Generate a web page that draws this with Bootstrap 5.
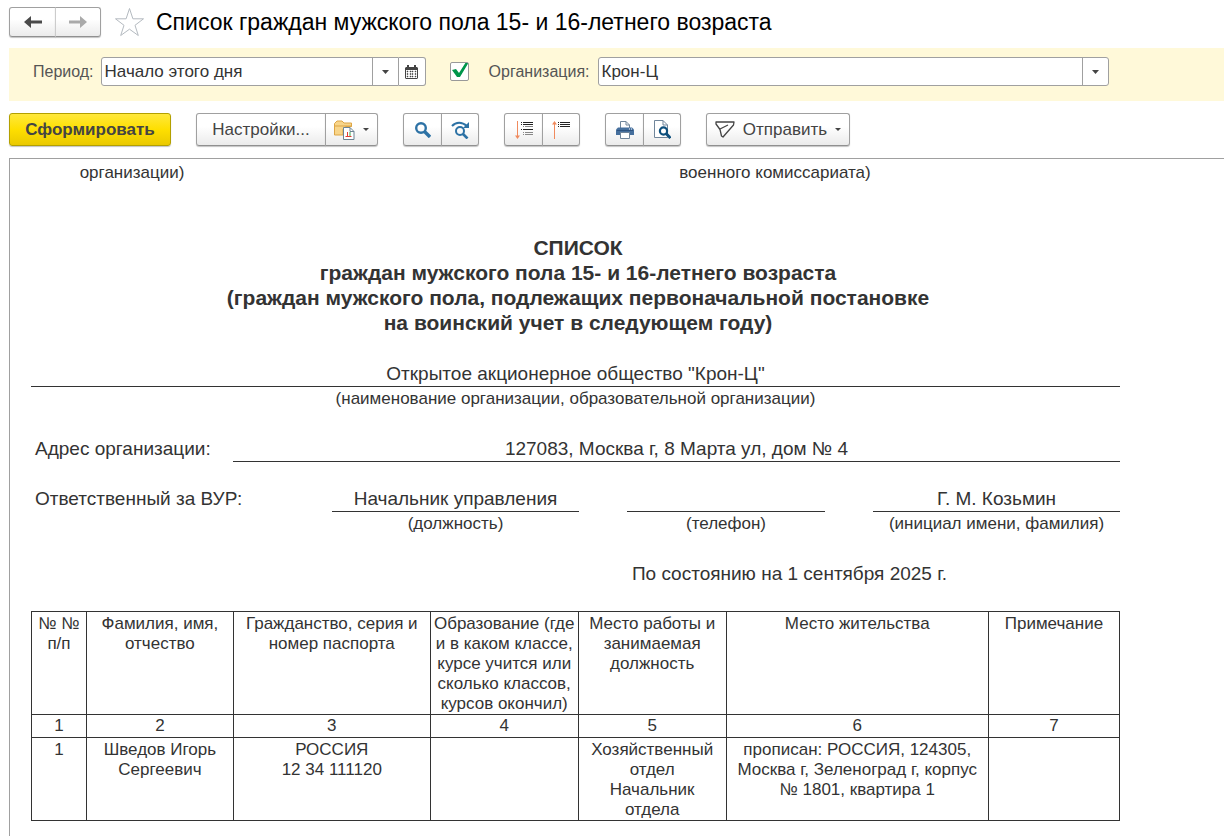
<!DOCTYPE html>
<html lang="ru">
<head>
<meta charset="utf-8">
<meta name="viewport" content="width=device-width, initial-scale=1">
<title>Список граждан мужского пола 15- и 16-летнего возраста</title>
<link rel="stylesheet" href="https://cdn.jsdelivr.net/npm/bootstrap@5.3.0/dist/css/bootstrap.min.css">
<style>
body{font-family:"Liberation Sans",Arial,sans-serif;font-size:16px;line-height:20px;color:#333;background:#fff}
.app{height:100vh;padding-left:9px;overflow:hidden}
.titlebar{height:48px;padding-top:7px}
.titlebar h1{font-size:23px;line-height:30px;color:#000;font-weight:400}
.btn-tool{--bs-btn-color:#444;--bs-btn-border-color:#a0a0a0;--bs-btn-hover-color:#222;--bs-btn-hover-border-color:#888;--bs-btn-active-border-color:#888;--bs-btn-border-radius:3px;--bs-btn-padding-x:0;--bs-btn-padding-y:0;--bs-btn-font-size:17px;--bs-btn-line-height:20px;
 height:33px;display:inline-flex;align-items:center;justify-content:center;background:linear-gradient(#fff 40%,#ebebeb);border-bottom-color:#909090;box-shadow:0 1px 1px #c4c4c4}
.btn-icon{width:39px}
.btn-icon:last-child{width:38px}
.nav-pair .btn-tool{width:47px;height:30px}
.nav-pair .btn-tool + .btn-tool{width:46px;border-left-color:#ccc}
.btn-star{margin-left:14px}
.btn-run{--bs-btn-color:#444;font-weight:700;width:162px;background:linear-gradient(#ffe83c,#fedf00 50%,#eac900);border-color:#b3a000}
.btn-settings{width:130px}
.btn-variants{width:53px}
.btn-send{width:144px}
.caret{width:0;border:3px solid transparent;border-top:3px solid #444;border-bottom:0}
.filters{background:#fff9d9;min-height:53px;padding:9px 115px 15px 24px;color:#555}
.field{height:29px;border:1px solid #a0a0a0;border-radius:3px;padding:0 30px 0 3px;color:#333;font-size:17px;line-height:20px;
 background-color:#fff;background-image:url("data:image/svg+xml,%3Csvg xmlns='http://www.w3.org/2000/svg' width='26' height='27'%3E%3Cpath d='M.5 0v27' stroke='%23a0a0a0'/%3E%3Cpath d='M10 12h7l-3.500 4z' fill='%23444'/%3E%3C/svg%3E");background-size:26px 27px;background-position:right center;background-repeat:no-repeat}
.period{width:325px}
.period .field{border-radius:3px 0 0 3px}
.btn-cal{width:27px;height:29px;background:#fff;box-shadow:none;border-color:#a0a0a0;border-radius:0 3px 3px 0}
.tick{width:19px;height:19px;margin:0;border:1px solid #999!important;border-radius:2px!important;background-color:#fff!important;background-origin:border-box;background-size:19px 19px!important}
.tick:checked{background-image:url("data:image/svg+xml,%3Csvg xmlns='http://www.w3.org/2000/svg' width='19' height='19'%3E%3Cpath d='M2 8l4-1 3 4L16 0l3 0L10 15H7z' fill='%2300964a'/%3E%3C/svg%3E")!important}
.filter-label{margin-right:7px}
.toolbar{gap:25px;padding:12px 0}
.sheet{border:1px solid #a0a0a0;border-width:1px 0 0 1px;padding:0 104px 16px 21px;font-size:17px}
.sheet-top{display:grid;grid-template-columns:202fr 197fr 197fr 296fr 197fr;height:76px}
.doc-title{font-size:21px;line-height:25px;font-weight:700;margin:0 0 27px;padding-left:5px}
.big{font-size:19px;line-height:24px}
.ruled{border-bottom:1px solid #333;height:25px;text-align:center}
.caption-line{text-align:center;padding-top:2px;height:25px}
.address{display:grid;grid-template-columns:202fr 887fr;margin-top:25px}
.officer{display:grid;grid-template-columns:301fr 247fr 48fr 198fr 48fr 247fr;margin-top:25px}
.officer .post{grid-column:2}.officer .phone{grid-column:4}.officer .person{grid-column:6}
.as-of{margin:25px 0;text-align:center;padding-left:428px}
.roster{--bs-table-color:#333;--bs-table-bg:transparent;border-color:#333;table-layout:fixed;margin:0;text-align:center}
.roster>:not(caption)>*>*{padding:2px 1px 0;font-weight:400;border:1px solid #333;vertical-align:top}
.roster .heads th{height:103px}
.roster .nums td{height:23px;padding-top:1px}
.roster .person-row td{height:83px}
</style>
</head>
<body>
<main class="app">
<header class="titlebar d-flex align-items-start">
 <div class="btn-group nav-pair" role="group" aria-label="Навигация">
  <button type="button" class="btn btn-tool" aria-label="Назад"><svg width="18" height="14" viewBox="0 0 18 14"><path d="M0 7l7-6v4.500h11v3H7V13z" fill="#4a4a4a"/></svg></button>
  <button type="button" class="btn btn-tool" aria-label="Вперёд"><svg width="18" height="14" viewBox="0 0 18 14"><path d="M18 7l-7-6v4.500H0v3h11V13z" fill="#aaa"/></svg></button>
 </div>
 <button type="button" class="btn btn-star p-0 border-0 d-flex" aria-label="В избранное"><svg width="29" height="30" viewBox="0 0 29 30"><path d="M14.500 1.500l3.400 10.300H28.500l-8.500 6.500 3.300 10.200-8.800-6.300-8.800 6.300L9 18.300.5 11.800h10.600z" fill="#fff" stroke="#b4bac0"/></svg></button>
 <h1 class="mb-0 ms-2 ps-1">Список граждан мужского пола 15- и 16-летнего возраста</h1>
</header>

<form class="filters d-flex align-items-center">
 <label for="period" class="filter-label">Период:</label>
 <div class="period d-flex flex-shrink-0">
  <select id="period" class="form-select field"><option>Начало этого дня</option></select>
  <button type="button" class="btn btn-tool btn-cal flex-shrink-0 border-start-0" aria-label="Выбрать период"><svg width="13" height="14" viewBox="0 0 13 14"><path d="M1 2h1V0h2v2h5V0h2v2h1l1 1v10l-1 1H1l-1-1V3z" fill="#444"/><path d="M1 5h11v8H1z" fill="#fff"/><path d="M2 6h1v1H2zm3 0h1v1H5zm2 0h1v1H7zm3 0h1v1h-1zM2 8.500h1v1H2zm3 0h1v1H5zm2 0h1v1H7zm3 0h1v1h-1zM2 11h1v1H2zm3 0h1v1H5zm2 0h1v1H7zm3 0h1v1h-1z" fill="#444" stroke="#444" stroke-width=".5"/></svg></button>
 </div>
 <input id="useorg" type="checkbox" class="form-check-input tick flex-shrink-0 ms-4 me-3" checked aria-label="Отбор по организации">
 <label for="org" class="me-2 ps-1">Организация:</label>
 <select id="org" class="form-select field"><option>Крон-Ц</option></select>
</form>

<div class="toolbar d-flex" role="toolbar" aria-label="Команды отчёта">
 <button type="button" class="btn btn-tool btn-run">Сформировать</button>
 <div class="btn-group">
  <button type="button" class="btn btn-tool btn-settings">Настройки...</button>
  <button type="button" class="btn btn-tool btn-variants gap-2" aria-label="Варианты отчёта"><svg width="21" height="20" viewBox="0 0 21 20"><path d="M.5 15V3.500L3 1h5l2 2h7.500v3.500h-6L9 9v6z" fill="#f8d58a" stroke="#dda545"/><path d="M1 6h17" stroke="#dda545"/><path d="M9.500 7.500H16l4 4v8H9.500z" fill="#fff" stroke="#6d8494"/><path d="M16 7.500v4h4" fill="none" stroke="#6d8494"/><path d="M13.500 16v-4" stroke="#e23c32"/><path d="M16 16v-4" stroke="#38a34a"/><path d="M11.500 16.500h6" stroke="#e23c32"/></svg><span class="caret"></span></button>
 </div>
 <div class="btn-group">
  <button type="button" class="btn btn-tool btn-icon" aria-label="Найти"><svg width="16" height="16" viewBox="0 0 16 16" fill="none" stroke="#2d72a5"><circle cx="6" cy="6" r="4.800" stroke-width="2.400"/><path d="M9.500 9.500L15 15" stroke-width="3.400"/></svg></button>
  <button type="button" class="btn btn-tool btn-icon" aria-label="Найти далее"><svg width="19" height="18" viewBox="0 0 19 18" fill="none" stroke="#2d72a5"><path d="M1 5C5 .5 11 .5 16 5" stroke-width="2"/><path d="M18 1v6h-6z" fill="#2d72a5" stroke="none"/><circle cx="9" cy="10" r="4" stroke-width="2"/><path d="M12 13l4.500 4.500" stroke-width="2.600"/></svg></button>
 </div>
 <div class="btn-group">
  <button type="button" class="btn btn-tool btn-icon" aria-label="Развернуть группы"><svg width="18" height="18" viewBox="0 0 18 18"><path d="M2.500 0v15" stroke="#f08a5d"/><path d="M0 14.500h5L2.500 18z" fill="#f08a5d"/><path d="M6 1.500h1m1 0h10M6 3.500h1m1 0h10" stroke="#222"/><path d="M8 5.500h1m1 0h8M8 11.500h1m1 0h8M8 13.500h1m1 0h8" stroke="#888"/><path d="M6 8.500h1m1 0h10" stroke="#222"/></svg></button>
  <button type="button" class="btn btn-tool btn-icon" aria-label="Свернуть группы"><svg width="18" height="18" viewBox="0 0 18 18"><path d="M2.500 3v15" stroke="#f08a5d"/><path d="M0 3.500h5L2.500 0z" fill="#f08a5d"/><path d="M6 1.500h1m1 0h10M6 3.500h1m1 0h10M6 5.500h1m1 0h10" stroke="#222"/></svg></button>
 </div>
 <div class="btn-group">
  <button type="button" class="btn btn-tool btn-icon" aria-label="Печать"><svg width="18" height="18" viewBox="0 0 18 18"><path d="M4.500 8V.5H10L13.500 4v4" fill="#fff" stroke="#70859a"/><path d="M10 .5V4h3.500" fill="none" stroke="#70859a"/><path d="M2 6.500h14l2 2V14H0V8.500z" fill="#456f9d"/><path d="M1 9.500h16" stroke="#2d5380"/><path d="M13 8h1m1 0h1" stroke="#fff"/><path d="M4.500 11.500h9v6h-9z" fill="#fff" stroke="#70859a"/></svg></button>
  <button type="button" class="btn btn-tool btn-icon" aria-label="Предварительный просмотр"><svg width="18" height="19" viewBox="0 0 18 19"><path d="M1.500 17.500V.5H10L14.500 5v12.500z" fill="#fff" stroke="#70859a"/><path d="M10 .5V5h4.500" fill="none" stroke="#70859a"/><circle cx="10.500" cy="11" r="3.600" fill="#fff" stroke="#0d4f7d" stroke-width="2.200"/><path d="M13 13.500l4.500 4.500" stroke="#0d4f7d" stroke-width="3"/></svg></button>
 </div>
 <button type="button" class="btn btn-tool btn-send gap-2"><svg width="20" height="17" viewBox="0 0 20 17" fill="none" stroke="#444" stroke-width="1.300" stroke-linejoin="round"><path d="M1 1h18l-.5 3L8 16 6.500 15 5 8.500 1 3zM5 8l8-4"/></svg><span>Отправить</span><span class="caret"></span></button>
</div>

<section class="sheet" aria-label="Отчёт">
 <div class="sheet-top text-center"><span class="pt-1">организации)</span><span></span><span></span><span class="pt-1">военного комиссариата)</span></div>
 <h2 class="doc-title text-center">СПИСОК<br>граждан мужского пола 15- и 16-летнего возраста<br>(граждан мужского пола, подлежащих первоначальной постановке<br>на воинский учет в следующем году)</h2>
 <div class="ruled big">Открытое акционерное общество "Крон-Ц"</div>
 <div class="caption-line">(наименование организации, образовательной организации)</div>
 <div class="address"><span class="big ps-1">Адрес организации:</span><span class="ruled big">127083, Москва г, 8 Марта ул, дом № 4</span></div>
 <div class="officer">
  <span class="big ps-1">Ответственный за ВУР:</span>
  <div class="post"><div class="ruled big">Начальник управления</div><div class="caption-line">(должность)</div></div>
  <div class="phone"><div class="ruled big"></div><div class="caption-line">(телефон)</div></div>
  <div class="person"><div class="ruled big">Г. М. Козьмин</div><div class="caption-line">(инициал имени, фамилия)</div></div>
 </div>
 <p class="as-of big">По состоянию на 1 сентября 2025 г.</p>
 <table class="table roster">
  <colgroup><col style="width:5.05%"><col style="width:13.5%"><col style="width:18.1%"><col style="width:13.6%"><col style="width:13.6%"><col style="width:24.1%"><col style="width:12.05%"></colgroup>
  <thead>
   <tr class="heads"><th>№ №<br>п/п</th><th>Фамилия, имя,<br>отчество</th><th>Гражданство, серия и<br>номер паспорта</th><th>Образование (где<br>и в каком классе,<br>курсе учится или<br>сколько классов,<br>курсов окончил)</th><th>Место работы и<br>занимаемая<br>должность</th><th>Место жительства</th><th>Примечание</th></tr>
  </thead>
  <tbody>
   <tr class="nums"><td>1</td><td>2</td><td>3</td><td>4</td><td>5</td><td>6</td><td>7</td></tr>
   <tr class="person-row"><td>1</td><td>Шведов Игорь<br>Сергеевич</td><td>РОССИЯ<br>12 34 111120</td><td></td><td>Хозяйственный<br>отдел<br>Начальник<br>отдела</td><td>прописан: РОССИЯ, 124305,<br>Москва г, Зеленоград г, корпус<br>№ 1801, квартира 1</td><td></td></tr>
  </tbody>
 </table>
</section>
</main>
<script src="https://cdn.jsdelivr.net/npm/bootstrap@5.3.0/dist/js/bootstrap.bundle.min.js"></script>
</body>
</html>
